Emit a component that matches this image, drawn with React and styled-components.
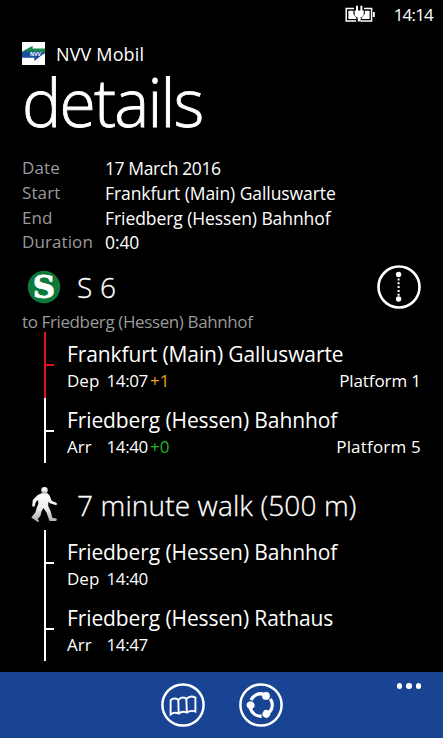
import React from "react";
import styled, { createGlobalStyle } from "styled-components";

const summary = [
  { label: "Date", value: "17 March 2016", spacing: -0.4 },
  { label: "Start", value: "Frankfurt (Main) Galluswarte", spacing: -0.07 },
  { label: "End", value: "Friedberg (Hessen) Bahnhof", spacing: -0.07 },
  { label: "Duration", value: "0:40", spacing: -0.1 },
];

const trainStops = [
  {
    name: "Frankfurt (Main) Galluswarte",
    kind: "Dep",
    time: "14:07",
    delay: "+1",
    delayColor: "#e9a21c",
    platform: "Platform 1",
    spacing: -0.1,
    color: "#e01414",
  },
  {
    name: "Friedberg (Hessen) Bahnhof",
    kind: "Arr",
    time: "14:40",
    delay: "+0",
    delayColor: "#22b32b",
    platform: "Platform 5",
    spacing: 0.2,
    color: "#fff",
  },
];

const walkStops = [
  { name: "Friedberg (Hessen) Bahnhof", kind: "Dep", time: "14:40", color: "#fff" },
  { name: "Friedberg (Hessen) Rathaus", kind: "Arr", time: "14:47", color: "#fff" },
];

const BatteryIcon = () => (
  <svg width="31" height="20" viewBox="0 0 31 20" fill="none">
    <path d="M9 4.500H1.200v12.500h10M19 4.500h7.600v12.500h-11" stroke="#fff" strokeWidth="1.500" />
    <path d="M3.400 6.800h5v3.200l3 4v1h-8zM19.800 6.800h4.800v8.200h-8v-1l3.200-4z" fill="#fff" />
    <path d="M28 8h1.800v5H28z" fill="#fff" />
    <path
      d="M9.600 6.500h1.400V1.800h2v4.700h2.400V1.800h2v4.700h1.400v3.200c0 2.200-1.500 3.400-3.100 3.800v4h-3v-4c-1.700-.4-3.100-1.700-3.100-3.800z"
      fill="#fff"
    />
  </svg>
);

const NvvLogo = () => (
  <svg width="23" height="23" viewBox="0 0 23 23">
    <path d="M0 0h23v23H0z" fill="#fff" />
    <path d="M0 10.500 10.500 4v2.600H23v5.200H9z" fill="#188a4b" />
    <path d="M0 9.500h16l7 1.200L12.300 19v-3.300H0z" fill="#174f9e" />
    <path d="M0 9.500 10.500 4l-1 4.200z" fill="#188a4b" />
    <text x="8" y="14" fontSize="5.2" fontWeight="700" fill="#fff" fontFamily="Open Sans, sans-serif">
      NVV
    </text>
  </svg>
);

const SBahnIcon = () => (
  <svg width="34" height="34" viewBox="0 0 34 34">
    <circle cx="17" cy="17" r="16.200" fill="#0b7a3b" />
    <text
      x="17"
      y="28.2"
      textAnchor="middle"
      fontSize="31"
      fontWeight="700"
      fill="#fff"
      stroke="#fff"
      strokeWidth=".8"
      fontFamily="DejaVu Serif, serif"
    >
      S
    </text>
  </svg>
);

const WalkIcon = () => (
  <svg width="30" height="38" viewBox="0 0 30 38">
    <defs>
      <linearGradient id="walker" x1="0" y1="0" x2="0" y2="1">
        <stop offset="0" stopColor="#fff" />
        <stop offset=".5" stopColor="#eee" />
        <stop offset="1" stopColor="#aaa" />
      </linearGradient>
    </defs>
    <g fill="url(#walker)">
      <circle cx="15.500" cy="4.200" r="3.200" />
      <path d="M12.500 7.200h6l2.200 2.600 2 5 4.600 2c1.200.8.600 2.600-.8 2.300l-5.500-1.800-1.600-1.600-.2 4.300 2.400 5 1.800 6.700 3.800.9c1 .7.700 2.300-.5 2.300h-6.200l-3-8.300-3.200-4.600-2 4-.9 3.900-2.700 3 1.300 2c0 1.200-1.200 1.300-2 .6L2.300 31.400l4.200-5.200 1.300-4.700 1.500-3.500-.2-4-2.300 1.900-1 4c-.6 1.300-2.500.9-2.600-.4l.6-5.500 5-5z" />
    </g>
  </svg>
);

const StopsIcon = () => (
  <svg width="44" height="44" viewBox="0 0 44 44" fill="#fff">
    <circle cx="22" cy="22" r="20.500" fill="none" stroke="#fff" strokeWidth="2.600" />
    <circle cx="21.600" cy="9.500" r="2.700" />
    <circle cx="21.600" cy="34" r="2.700" />
    <path d="M21.600 13.500v18" stroke="#fff" strokeWidth="2" strokeDasharray="2 1.800" />
  </svg>
);

const MapIcon = () => (
  <svg width="44" height="44" viewBox="0 0 44 44" fill="none" stroke="#fff">
    <circle cx="22" cy="22" r="20.600" strokeWidth="2.500" />
    <path
      d="M9.600 17.200Q13 14.200 17.300 16.800Q21 12.800 25.300 15.800Q29.500 11.800 34.400 14.500V28.600Q29.500 26.700 25.900 29.600Q21.500 27.600 17.700 30.600Q13.500 28.600 9.600 31.400z"
      strokeWidth="1.900"
    />
    <path d="M17.300 16.800l.4 13.800M25.300 15.800l.6 13.800" strokeWidth="1.900" />
  </svg>
);

const ShareIcon = () => (
  <svg width="44" height="44" viewBox="0 0 44 44" fill="none" stroke="#fff">
    <circle cx="22" cy="22" r="20.600" strokeWidth="2.500" />
    {[0, 120, 240].map((angle) => (
      <g key={angle} transform={`rotate(${angle} 22 22)`}>
        <path d="M12 17A11.200 11.200 0 0 1 24 11" strokeWidth="3.400" />
        <circle cx="27" cy="12.900" r="3.900" fill="#fff" stroke="none" />
      </g>
    ))}
  </svg>
);

const Stops = ({ stops }) => (
  <div>
    {stops.map((stop) => (
      <StopRow key={stop.kind}>
        <Rail $color={stop.color}>
          <Tick $color={stop.color} />
        </Rail>
        <StopBody>
          <StopName>{stop.name}</StopName>
          <StopDetail>
            <Kind>{stop.kind}</Kind>
            <Time>{stop.time}</Time>
            {stop.delay && <Delay $color={stop.delayColor}>{stop.delay}</Delay>}
            {stop.platform && <Platform $spacing={stop.spacing}>{stop.platform}</Platform>}
          </StopDetail>
        </StopBody>
      </StopRow>
    ))}
  </div>
);

const App = () => {
  return (
    <Screen>
      <GlobalStyle />
      <StatusBar>
        <BatteryIcon />
        <Clock>14:14</Clock>
      </StatusBar>

      <Content>
        <AppHeader>
          <NvvLogo />
          <AppName>NVV Mobil</AppName>
        </AppHeader>
        <Title>details</Title>

        <Summary>
          {summary.map((row) => (
            <React.Fragment key={row.label}>
              <Label>{row.label}</Label>
              <Value $spacing={row.spacing}>{row.value}</Value>
            </React.Fragment>
          ))}
        </Summary>

        <LegHeader>
          <LegIcon>
            <SBahnIcon />
          </LegIcon>
          <LegTitle>S 6</LegTitle>
          <RoundButton aria-label="Stops">
            <StopsIcon />
          </RoundButton>
        </LegHeader>
        <Direction>to Friedberg (Hessen) Bahnhof</Direction>
        <Stops stops={trainStops} />

        <LegHeader $walk>
          <LegIcon>
            <WalkIcon />
          </LegIcon>
          <LegTitle $walk>7 minute walk (500 m)</LegTitle>
        </LegHeader>
        <Stops stops={walkStops} />
      </Content>

      <AppBar>
        <RoundButton aria-label="Map">
          <MapIcon />
        </RoundButton>
        <RoundButton aria-label="Share">
          <ShareIcon />
        </RoundButton>
        <MoreButton aria-label="More">
          <Dot />
          <Dot />
          <Dot />
        </MoreButton>
      </AppBar>
    </Screen>
  );
};

export default App;

const GlobalStyle = createGlobalStyle`
  body {
    margin: 0;
    background: #000;
  }
  * {
    box-sizing: border-box;
  }
  svg {
    display: block;
    flex-shrink: 0;
  }
`;

const Screen = styled.div`
  display: flex;
  flex-direction: column;
  width: 443px;
  height: 738px;
  overflow: hidden;
  background: #000;
  color: #fff;
  font-family: "Open Sans", "Noto Sans", sans-serif;
  font-size: 17px;
  white-space: nowrap;
`;

const StatusBar = styled.div`
  display: flex;
  align-items: center;
  justify-content: flex-end;
  gap: 18px;
  height: 28px;
  padding-right: 10px;
`;

const Clock = styled.span`
  font-size: 17px;
  letter-spacing: -0.8px;
`;

const Content = styled.div`
  flex: 1;
  padding: 14px 22px 0;
`;

const AppHeader = styled.div`
  display: flex;
  align-items: center;
  height: 23px;
  gap: 11px;
`;

const AppName = styled.span`
  font-size: 18px;
  letter-spacing: 0.15px;
`;

const Title = styled.h1`
  margin: 0;
  font-size: 66px;
  font-weight: 300;
  line-height: 73px;
  letter-spacing: -1.8px;
  -webkit-text-stroke: 0.8px #fff;
`;

const Summary = styled.div`
  display: grid;
  grid-template-columns: 83px 1fr;
  grid-auto-rows: 24.8px;
  margin-top: 18px;
  line-height: 24.8px;
`;

const Label = styled.span`
  color: #9a9a9a;
  letter-spacing: 0.1px;
`;

const Value = styled.span`
  font-size: 17.5px;
  letter-spacing: ${({ $spacing }) => $spacing}px;
`;

const LegHeader = styled.div`
  display: flex;
  align-items: center;
  height: 49px;
  margin-top: ${({ $walk }) => ($walk ? "17.5px" : "7.6px")};
`;

const LegIcon = styled.div`
  display: flex;
  justify-content: center;
  width: 44px;
  margin-right: 11px;
`;

const LegTitle = styled.h2`
  flex: 1;
  margin: 0;
  font-size: 28px;
  font-weight: 300;
  letter-spacing: ${({ $walk }) => ($walk ? "0.13px" : "0.2px")};
  -webkit-text-stroke: 0.3px #fff;
`;

const RoundButton = styled.button`
  padding: 0;
  border: 0;
  background: none;
`;

const Direction = styled.div`
  height: 20.2px;
  color: #9a9a9a;
  line-height: 20px;
  letter-spacing: -0.38px;
`;

const StopRow = styled.div`
  display: flex;
  height: 65.7px;
`;

const Rail = styled.div`
  width: 2px;
  margin-left: 22px;
  padding-top: 32px;
  background: ${({ $color }) => $color};
`;

const Tick = styled.div`
  width: 10px;
  height: 2px;
  background: ${({ $color }) => $color};
`;

const StopBody = styled.div`
  flex: 1;
  padding: 8.2px 0 0 21px;
`;

const StopName = styled.div`
  font-size: 21px;
  line-height: 28px;
  letter-spacing: -0.1px;
`;

const StopDetail = styled.div`
  display: flex;
  line-height: 26px;
`;

const Kind = styled.span`
  width: 39.5px;
`;

const Time = styled.span`
  width: 43.5px;
  letter-spacing: -0.4px;
`;

const Delay = styled.span`
  color: ${({ $color }) => $color};
`;

const Platform = styled.span`
  margin-left: auto;
  letter-spacing: ${({ $spacing }) => $spacing}px;
`;

const AppBar = styled.div`
  display: flex;
  align-items: flex-start;
  justify-content: center;
  gap: 34px;
  position: relative;
  height: 66px;
  padding-top: 11px;
  background: #194494;
`;

const MoreButton = styled.button`
  position: absolute;
  top: 11px;
  right: 22px;
  display: flex;
  gap: 4px;
  padding: 0;
  border: 0;
  background: none;
`;

const Dot = styled.span`
  width: 5.5px;
  height: 5.5px;
  border-radius: 50%;
  background: #fff;
`;
